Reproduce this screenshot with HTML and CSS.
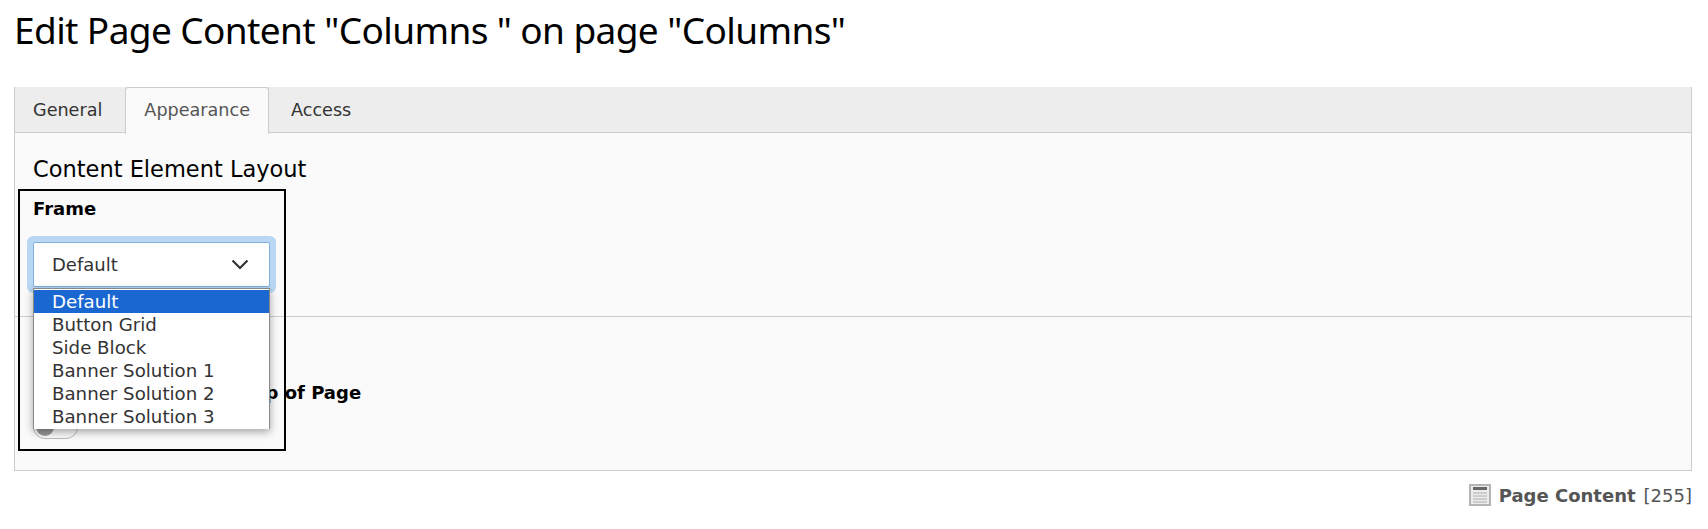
FILE: index.html
```html
<!DOCTYPE html>
<html lang="en">

<head>
    <meta charset="UTF-8">
    <meta name="viewport" content="width=device-width, initial-scale=1.0">
    <title>Edit Page Content</title>
    <link rel="stylesheet" href="styles.css">
</head>

<body>
    <h1 class="page-title">Edit Page Content "Columns " on page "Columns"</h1>
    <div class="form-panel">
        <ul class="tabs">
            <li class="tab">General</li>
            <li class="tab tab-active">Appearance</li>
            <li class="tab">Access</li>
        </ul>
        <div class="tab-body">
            <div class="section section-layout">
                <h4 class="section-title">Content Element Layout</h4>
                <label class="field-label">Frame</label>
                <div class="select-box">
                    <span>Default</span>
                    <svg class="select-arrow" width="18" height="11" viewBox="0 0 18 11">
                        <path d="M1.5 1.5 L9 9 L16.5 1.5" fill="none" stroke="#333" stroke-width="2.2" />
                    </svg>
                </div>
                <ul class="select-list">
                    <li class="selected">Default</li>
                    <li>Button Grid</li>
                    <li>Side Block</li>
                    <li>Banner Solution 1</li>
                    <li>Banner Solution 2</li>
                    <li>Banner Solution 3</li>
                </ul>
            </div>
            <div class="section section-links">
                <label class="field-label link-label">Append with Link to Top of Page</label>
                <div class="toggle"><span class="toggle-knob"></span></div>
            </div>
            <div class="highlight-box"></div>
        </div>
    </div>
    <div class="record-info">
        <svg class="record-icon" width="22" height="22" viewBox="0 0 22 22">
            <rect width="22" height="22" fill="#b5b5b5" />
            <rect x="2" y="2" width="18" height="18" fill="#ececec" />
            <rect x="4" y="3" width="14" height="3" fill="#666" />
            <rect x="4" y="8" width="14" height="2" fill="#cdcdcd" />
            <rect x="4" y="11" width="14" height="2" fill="#cdcdcd" />
            <rect x="4" y="14" width="14" height="2" fill="#cdcdcd" />
            <rect x="4" y="17" width="14" height="2" fill="#cdcdcd" />
        </svg>
        <strong>Page Content</strong>
        <span class="record-id">[255]</span>
    </div>
</body>

</html>
```
FILE: styles.css
```css
body {
    font-family: "DejaVu Sans", Verdana, sans-serif;
    font-size: 18px;
    margin: 0;
    padding: 0 16px 0 14px;
    background-color: #fff;
    color: #000;
}

.page-title {
    font-family: "Noto Sans", sans-serif;
    font-size: 37px;
    font-weight: 400;
    line-height: 44px;
    letter-spacing: -0.6px;
    margin: 0;
    padding: 8px 0 35px 0;
}

.form-panel {
    border: 1px solid #ccc;
    border-top: none;
    background-color: #fafafa;
}

.tabs {
    list-style-type: none;
    margin: 0;
    padding: 0;
    display: flex;
    gap: 4px;
    height: 46px;
    background-color: #ededed;
    border-bottom: 1px solid #ccc;
    box-sizing: border-box;
}

.tab {
    padding: 0 18px;
    font-size: 17.6px;
    line-height: 47px;
    height: 46px;
    box-sizing: border-box;
    color: #333;
}

.tab:first-child {
    margin-right: 1px;
}

.tab-active {
    background-color: #fafafa;
    color: #555;
    border: 1px solid #ccc;
    border-bottom: none;
    border-radius: 3px 3px 0 0;
    line-height: 45px;
    height: 47px;
}

.tab-body {
    position: relative;
}

.section {
    padding: 0 18px;
}

.section-layout {
    height: 183px;
    border-bottom: 1px solid #ccc;
    position: relative;
}

.section-title {
    font-size: 22.5px;
    font-weight: 400;
    line-height: 26px;
    margin: 0;
    padding-top: 23px;
}

.field-label {
    display: block;
    font-weight: 700;
    line-height: 20px;
    margin-top: 17px;
}

.select-box {
    margin-top: 23px;
    width: 237px;
    height: 45px;
    box-sizing: border-box;
    border: 1px solid #7fb0e0;
    border-radius: 2px;
    background-color: #fff;
    box-shadow: 0 0 0 6px #b9d7f3;
    display: flex;
    align-items: center;
    justify-content: space-between;
    padding: 0 20px 0 18px;
    color: #333;
}

.select-list {
    list-style-type: none;
    margin: 0;
    padding: 1px 0 0;
    position: absolute;
    left: 18px;
    top: 155px;
    width: 237px;
    height: 141px;
    box-sizing: border-box;
    font-size: 18.2px;
    background-color: #fff;
    border: 1px solid #888;
    border-bottom: none;
    box-shadow: 0 3px 8px rgba(0, 0, 0, 0.35);
    z-index: 2;
    color: #333;
}

.select-list li {
    height: 23px;
    line-height: 23px;
    padding-left: 18px;
}

.select-list .selected {
    background-color: #1a67d2;
    color: #fff;
}

.section-links {
    padding-top: 66px;
    height: 153px;
    box-sizing: border-box;
}

.section-links .link-label {
    margin-top: 0;
}

.toggle {
    width: 45px;
    height: 24px;
    box-sizing: border-box;
    margin-top: 12px;
    border: 1px solid #bbb;
    border-radius: 12px;
    background-color: #fafafa;
    padding: 2px;
}

.toggle-knob {
    display: block;
    width: 18px;
    height: 18px;
    border-radius: 50%;
    background-color: #999;
}

.highlight-box {
    position: absolute;
    left: 3px;
    top: 56px;
    width: 268px;
    height: 262px;
    box-sizing: border-box;
    border: 2px solid #000;
}

.record-info {
    display: flex;
    justify-content: flex-end;
    align-items: center;
    gap: 8px;
    margin-top: 13px;
    color: #555;
}

.record-icon {
    flex-shrink: 0;
}
```
